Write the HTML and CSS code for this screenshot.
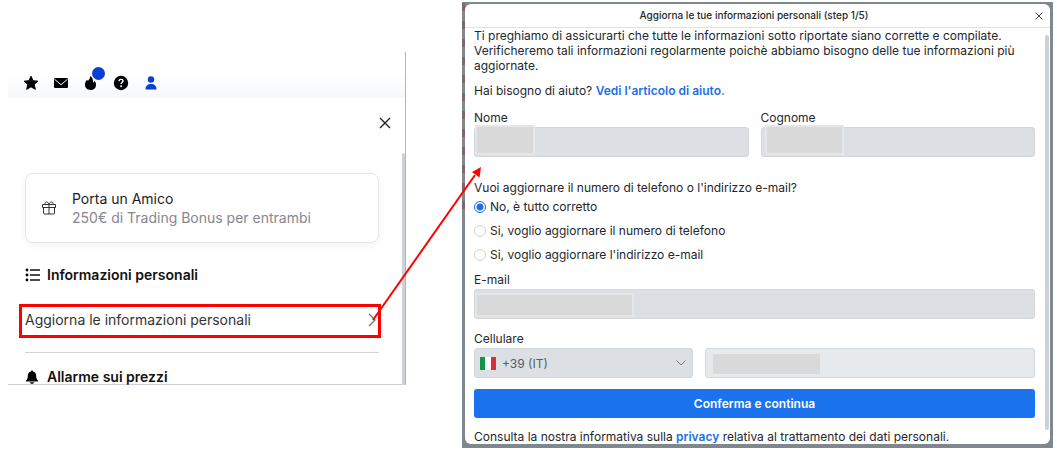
FILE: index.html
```
<!DOCTYPE html>
<html lang="it">
<head>
  <meta charset="UTF-8" />
  <title>Aggiorna le informazioni personali</title>
  <link rel="stylesheet" href="styles.css">
</head>
<body>
  <main class="guide">
    <section class="menu-panel">
      <nav class="top-icons">
        <a href="#" aria-label="Preferiti">
          <svg width="16" height="16" viewBox="0 0 16 16"><path d="M8 1.2l2 4.5 4.9.5-3.7 3.2 1.1 4.9L8 11.8l-4.3 2.5 1.1-4.9L1.1 6.2l4.9-.5z" stroke="#000" stroke-linejoin="round"/></svg>
        </a>
        <a href="#" aria-label="Messaggi">
          <svg width="16" height="16" viewBox="0 0 16 16"><rect x="1" y="3" width="14" height="10" rx="1"/><path d="M1.5 4.2L8 9.8l6.500-5.600" fill="none" stroke="#fff" stroke-width="1"/></svg>
        </a>
        <a href="#" class="hot" aria-label="Novità">
          <svg width="16" height="16" viewBox="0 0 16 16"><path d="M7 1c.5 2.300-.8 3.500-2 4.700-.7-.2-1-.5-1.100-1C2.600 6.200 2 7.800 2 9.800 2 13 4.400 15 7.500 15S13 13 13 10c0-1.800-.5-3.200-1.400-4.300-.3 1-.9 1.500-1.600 1.600C10.300 4.500 9.300 2.200 7 1z"/></svg>
          <span class="badge"></span>
        </a>
        <a href="#" aria-label="Aiuto">
          <svg width="16" height="16" viewBox="0 0 16 16"><circle cx="8" cy="8" r="7.200"/><path d="M6 6.300c0-1.200.8-1.900 2-1.900s2 .7 2 1.700c0 1.300-1.900 1.400-1.900 2.900" fill="none" stroke="#fff" stroke-width="1.400"/><circle cx="8.100" cy="11.200" r="1" fill="#fff"/></svg>
        </a>
        <a href="#" class="account" aria-label="Profilo">
          <svg width="16" height="16" viewBox="0 0 16 16"><circle cx="8" cy="4.500" r="3.200"/><path d="M2.500 14.500c0-3.600 2-5.500 5.500-5.500s5.500 1.900 5.500 5.500z"/></svg>
        </a>
      </nav>

      <div class="menu-scroll">
        <div class="menu">
          <button class="menu-close" aria-label="Chiudi">
            <svg width="12" height="12" viewBox="0 0 12 12"><path d="M1 1l10 10M11 1L1 11"/></svg>
          </button>

          <a href="#" class="friend-card">
            <svg width="16" height="16" viewBox="0 0 16 16"><path d="M1.500 4.500h13v3h-13zM2.500 7.500v5.500q0 1 1 1h9q1 0 1-1V7.500M8 4.500V14M8 4.500C7 1 3.500 1 4 4.500M8 4.500C9 1 12.500 1 12 4.500"/></svg>
            <span>
              <strong>Porta un Amico</strong>
              <small>250€ di Trading Bonus per entrambi</small>
            </span>
          </a>

          <h2 class="info-title">
            <svg width="16" height="14" viewBox="0 0 16 14"><path d="M5 2h10M5 7h10M5 12h10" stroke="#111" stroke-width="1.300"/><circle cx="2" cy="2" r="1.400"/><circle cx="2" cy="7" r="1.400"/><circle cx="2" cy="12" r="1.400"/></svg>
            Informazioni personali
          </h2>
          <a href="#" class="update-link">
            Aggiorna le informazioni personali
            <svg width="8" height="14" viewBox="0 0 8 14"><path d="M1 1l6 6-6 6"/></svg>
          </a>
          <h2 class="alert-title">
            <svg width="14" height="14" viewBox="0 0 14 14"><path d="M7 .5c.7 0 1 .4 1 1 2.200.5 3.200 2.200 3.200 4.500 0 2.400.6 3.400 1.800 4.500v1H1v-1C2.200 9.400 2.800 8.400 2.800 6c0-2.300 1-4 3.200-4.500 0-.6.3-1 1-1zM5 12.200h4c0 1-.9 1.600-2 1.600s-2-.6-2-1.600z"/></svg>
            Allarme sui prezzi
          </h2>
        </div>
        <div class="menu-thumb"></div>
      </div>
    </section>

    <section class="backdrop">
      <div class="page-edge"></div>
      <div class="modal">
        <header class="modal-header">
          <h1>Aggiorna le tue informazioni personali (step 1/5)</h1>
          <button aria-label="Chiudi">
            <svg width="8" height="8" viewBox="0 0 8 8"><path d="M.5.5l7 7M7.500.5l-7 7"/></svg>
          </button>
        </header>

        <div class="modal-scroll">
          <form class="form">
            <p>Ti preghiamo di assicurarti che tutte le informazioni sotto riportate siano corrette e compilate. Verificheremo tali informazioni regolarmente poichè abbiamo bisogno delle tue informazioni più aggiornate.</p>
            <p class="help">Hai bisogno di aiuto? <a href="#">Vedi l'articolo di aiuto.</a></p>

            <div class="names">
              <div class="field">
                <label for="nome">Nome</label>
                <input id="nome" type="text" disabled>
                <span class="mask mask-name"></span>
              </div>
              <div class="field">
                <label for="cognome">Cognome</label>
                <input id="cognome" type="text" disabled>
                <span class="mask mask-surname"></span>
              </div>
            </div>

            <fieldset>
              <legend>Vuoi aggiornare il numero di telefono o l'indirizzo e-mail?</legend>
              <label><input type="radio" name="update" checked> No, è tutto corretto</label>
              <label><input type="radio" name="update"> Si, voglio aggiornare il numero di telefono</label>
              <label><input type="radio" name="update"> Si, voglio aggiornare l'indirizzo e-mail</label>
            </fieldset>

            <div class="field">
              <label for="email">E-mail</label>
              <input id="email" type="email" disabled>
              <span class="mask mask-email"></span>
            </div>

            <div class="phone">
              <div class="field">
                <label for="prefix">Cellulare</label>
                <select id="prefix" disabled>
                  <option>+39 (IT)</option>
                </select>
                <svg class="flag" width="16" height="13" viewBox="0 0 16 13"><path fill="#fff" d="M0 0h16v13H0z"/><path fill="#159447" d="M0 0h5v13H0z"/><path fill="#d6303c" d="M11 0h5v13h-5z"/></svg>
                <svg class="chevron" width="10" height="6" viewBox="0 0 10 6"><path d="M.5.5L5 5 9.500.5"/></svg>
              </div>
              <div class="field number">
                <input type="tel" aria-label="Numero di cellulare" disabled>
                <span class="mask mask-phone"></span>
              </div>
            </div>

            <button type="button" class="confirm">Conferma e continua</button>
            <p class="privacy">Consulta la nostra informativa sulla <a href="#">privacy</a> relativa al trattamento dei dati personali.</p>
          </form>
          <div class="modal-thumb"></div>
        </div>
      </div>

      <!-- from the menu row to the form -->
      <svg class="arrow" width="110" height="156" viewBox="0 0 110 156"><path d="M1 154L103 9" stroke="#f00" stroke-width="2"/><path d="M109 1l-1.500 10.500-7.500-5.500z" fill="#f00"/></svg>
    </section>
  </main>
</body>
</html>
```
FILE: styles.css
```
* {
  box-sizing: border-box;
}

body {
  margin: 0;
  background: #fff;
  color: #24272c;
  font-family: Inter, "Liberation Sans", sans-serif;
  font-size: 12px;
  line-height: 15px;
}

h1, h2, p {
  margin: 0;
}

a {
  color: #1b6fe8;
  text-decoration: none;
}

p a {
  font-weight: 600;
}

button {
  padding: 0;
  border: 0;
  background: none;
  font: inherit;
}

svg {
  display: block;
  flex: none;
}

.guide {
  display: grid;
  grid-template-columns: 398fr 591fr;
  gap: 56px;
  align-items: start;
  padding: 2px 4px 4px 8px;
}

/* side menu */
.menu-panel {
  margin-top: 50px;
  border-right: 1px solid #b4b4b8;
  border-bottom: 1px solid #d0d0d2;
}

.top-icons {
  display: flex;
  gap: 14px;
  padding: 23px 15px 7px;
  background: linear-gradient(#fff 50%, #f5f7fa);
}

.top-icons .hot {
  position: relative;
}

.top-icons .account {
  fill: #0a3fd6;
}

.badge {
  position: absolute;
  top: -8px;
  right: -6px;
  width: 13px;
  height: 13px;
  border-radius: 50%;
  background: #0a3fd6;
}

.menu-scroll {
  display: flex;
}

.menu {
  flex: 1;
  padding: 19px 23px 0 17px;
}

.menu-close {
  display: block;
  margin: 0 -12px 0 auto;
}

.menu-close path {
  stroke: #222;
  stroke-width: 1.4;
}

.menu-thumb {
  width: 3px;
  margin-top: 55px;
  border-radius: 2px 2px 0 0;
  background: #cfd1d9;
}

.friend-card {
  display: flex;
  align-items: center;
  gap: 15px;
  height: 70px;
  margin-top: 44px;
  padding: 0 15px;
  border: 1px solid #e6e7ea;
  border-radius: 8px;
  box-shadow: 0 3px 8px rgba(0, 0, 0, 0.05);
  color: #1c1c1e;
  font-size: 14px;
  line-height: 19px;
}

.friend-card path {
  fill: none;
  stroke: #333;
}

.friend-card strong, .friend-card small {
  display: block;
  font-size: 14px;
  font-weight: 400;
}

.friend-card small {
  color: #85878f;
}

.menu h2 {
  display: flex;
  align-items: center;
  gap: 8px;
  color: #111;
  font-size: 14px;
  font-weight: 600;
  line-height: 18px;
}

.menu .info-title {
  gap: 6px;
  margin-top: 23px;
}

.update-link {
  display: flex;
  align-items: center;
  justify-content: space-between;
  height: 34px;
  margin: 20px -2px 0 -6px;
  padding: 0 2px 3px 3px;
  border: 3px solid #f00;
  color: #333;
  font-size: 14px;
}

.update-link path {
  fill: none;
  stroke: #777;
  stroke-width: 1.4;
}

.menu .alert-title {
  margin-top: 14px;
  padding-top: 17px;
  border-top: 1px solid #d2d3d6;
  line-height: 14px;
}

/* form dialog */
.backdrop {
  position: relative;
  padding: 2px 3px 4px;
  background: #7f878f;
}

.page-edge {
  position: absolute;
  top: 1px;
  left: 0;
  width: 3px;
  height: 206px;
  background: repeating-linear-gradient(#80666f 0 8px, #7f878f 8px 18px);
}

.modal {
  position: relative;
  border-radius: 6px;
  background: #fff;
}

.modal-header {
  display: flex;
  align-items: center;
  height: 24px;
  padding: 0 7px 0 8px;
  border-bottom: 1px solid #dfe1e4;
}

.modal-header h1 {
  flex: 1;
  font-size: 10px;
  font-weight: 500;
  text-align: center;
}

.modal-header path {
  stroke: #444;
}

.modal-scroll {
  display: flex;
}

.form {
  flex: 1;
  padding: 0 10px 0 9px;
}

.modal-thumb {
  width: 4px;
  margin: 7px 1px 14px 0;
  border-radius: 2px;
  background: #cdd2d7;
}

.help {
  margin-top: 10px;
}

.names {
  display: grid;
  grid-template-columns: 1fr 1fr;
  gap: 12px;
  margin-top: 12px;
}

.field {
  position: relative;
}

.field label {
  display: block;
  margin-bottom: 2px;
}

.field input, .field select {
  display: block;
  width: 100%;
  height: 30px;
  margin: 0;
  border: 1px solid #d2d7dc;
  border-radius: 3px;
  background: #dce0e5;
}

.field select {
  padding: 0 27px;
  appearance: none;
  color: #555b63;
  font: inherit;
  opacity: 1;
}

.mask {
  position: absolute;
  border: 2px solid #e6e6e6;
  background: #d9d9d9;
}

.mask-name {
  bottom: 2px;
  left: 1px;
  width: 60px;
  height: 30px;
}

.mask-surname {
  bottom: 2px;
  left: 4px;
  width: 79px;
  height: 30px;
}

.mask-email {
  bottom: 2px;
  left: 1px;
  width: 159px;
  height: 24px;
}

fieldset {
  margin: 23px 0 0;
  padding: 0 0 1px;
  border: 0;
}

legend {
  padding: 0;
}

fieldset label {
  display: flex;
  align-items: center;
  gap: 4px;
  height: 15px;
  margin-bottom: 9px;
}

legend + label {
  margin-top: 4px;
}

fieldset input {
  appearance: none;
  width: 12px;
  height: 12px;
  margin: 0;
  border: 1px solid #cfd3d8;
  border-radius: 50%;
}

fieldset input:checked {
  border-color: #1b6fe8;
  background: radial-gradient(#1b6fe8 3px, #fff 4px);
}

.phone {
  display: grid;
  grid-template-columns: 219fr 330fr;
  gap: 12px;
  align-items: end;
  margin-top: 12px;
}

.number input {
  background: #e7eaed;
}

.mask-phone {
  bottom: 4px;
  left: 8px;
  width: 107px;
  height: 20px;
  border: 0;
}

.flag {
  position: absolute;
  bottom: 8px;
  left: 6px;
}

.chevron {
  position: absolute;
  right: 7px;
  bottom: 12px;
  fill: none;
  stroke: #777d85;
}

.confirm {
  display: block;
  width: 100%;
  height: 29px;
  margin-top: 11px;
  border-radius: 3px;
  background: #1b72ed;
  color: #fff;
  font-weight: 600;
}

.privacy {
  margin-top: 11px;
}

.arrow {
  position: absolute;
  top: 164px;
  left: -90px;
}
```
